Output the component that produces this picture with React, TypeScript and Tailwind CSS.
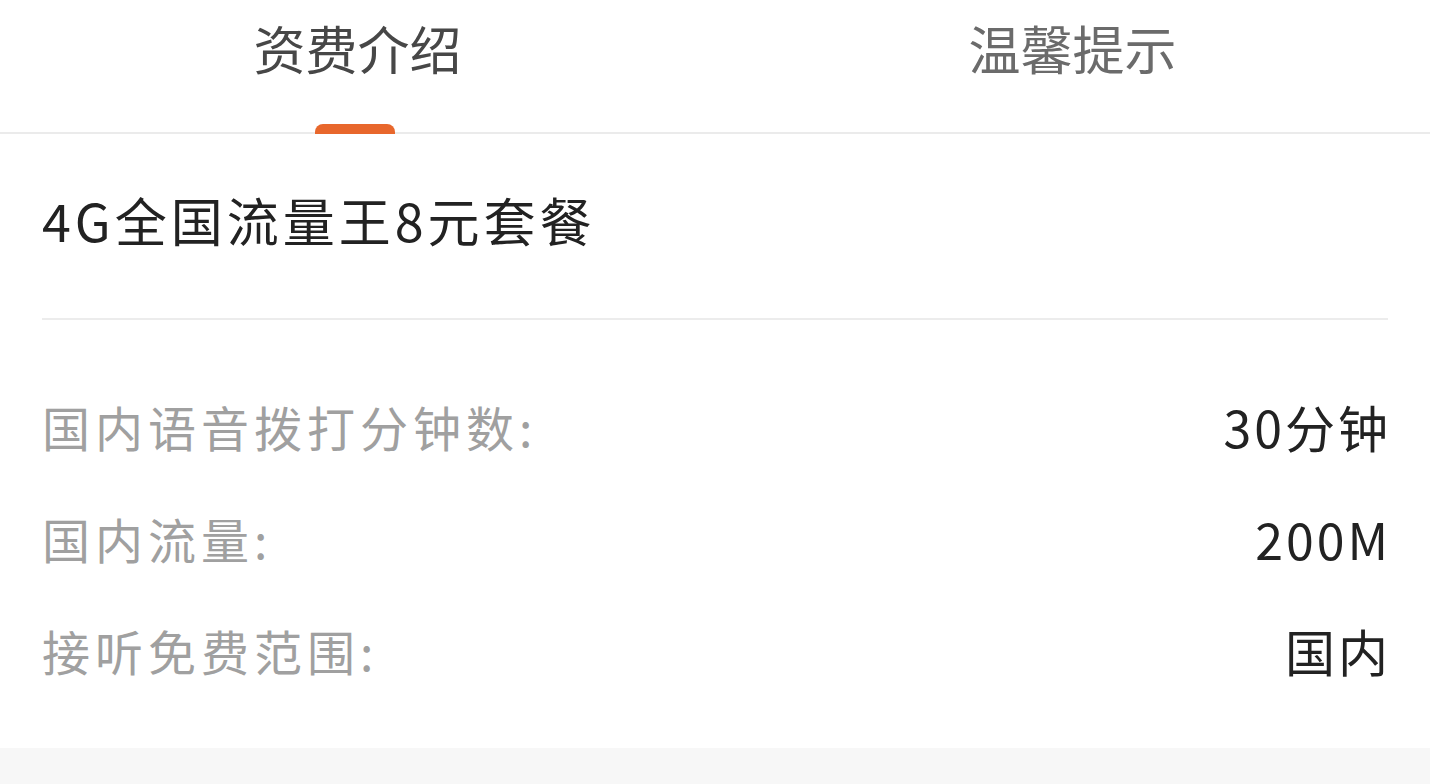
import React from "react";

const rows = [
  { label: "国内语音拨打分钟数:", value: "30分钟" },
  { label: "国内流量:", value: "200M" },
  { label: "接听免费范围:", value: "国内" },
];

export default function App() {
  return (
    <div
      className="w-[1430px] h-[784px] bg-white flex flex-col overflow-hidden"
      style={{ fontFamily: '"Noto Sans CJK SC", "Noto Sans", sans-serif' }}
    >
      <div className="flex h-[134px] border-b-2 border-[#ebebeb]">
        <div className="relative flex-1 flex justify-center pt-[20px]">
          <span className="text-[52px] leading-[56px] text-[#474747]">资费介绍</span>
          <div className="absolute bottom-[-2px] left-[315px] w-[80px] h-[10px] rounded-t-[8px] bg-[#e8672c]" />
        </div>
        <div className="flex-1 flex justify-center pt-[20px]">
          <span className="text-[52px] leading-[56px] text-[#6b6b6b]">温馨提示</span>
        </div>
      </div>
      <div className="px-[42px] flex flex-col">
        <div className="pt-[56px] pb-[68px] text-[52px] leading-[60px] tracking-[4px] text-[#222]">
          4G全国流量王8元套餐
        </div>
        <div className="h-[2px] bg-[#ececec]" />
        <div className="pt-[50px] flex flex-col">
          {rows.map((r) => (
            <div key={r.label} className="h-[112px] flex items-center justify-between">
              <span className="text-[48px] tracking-[5px] text-[#a0a0a0]">{r.label}</span>
              <span className="text-[50px] tracking-[3px] -mr-[3px] text-[#222]">{r.value}</span>
            </div>
          ))}
        </div>
      </div>
      <div className="flex-1" />
      <div className="h-[36px] bg-[#f7f7f7]" />
    </div>
  );
}
